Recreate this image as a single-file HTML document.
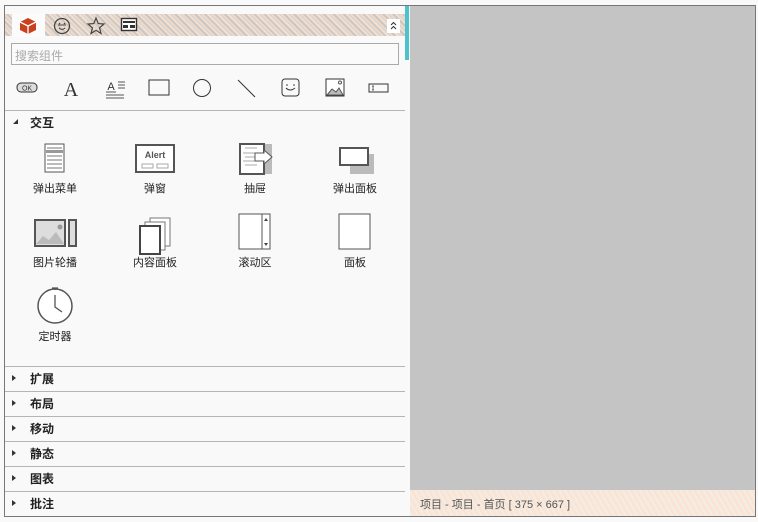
<!DOCTYPE html>
<html><head><meta charset="utf-8"><style>
*{margin:0;padding:0;box-sizing:border-box}
body{width:758px;height:522px;background:#f9f9f9;font-family:"Liberation Sans","Noto Sans CJK SC",sans-serif;position:relative;overflow:hidden}
.abs{position:absolute}
.frame{left:4px;top:5px;width:752px;height:512px;border:1px solid #777;}
.hdr{left:5px;top:14px;width:400px;height:22px;background:repeating-linear-gradient(45deg,#f0d8c6 0 2px,#c8c8c8 2px 4px,#f5dfcf 4px 6px,#d2d2d2 6px 7px)}
.tab{left:12px;top:13px;width:33px;height:24px;background:#fbfbfb}
.gray{left:410px;top:6px;width:345px;height:484px;background:#c4c4c4}
.status{left:410px;top:490px;width:345px;height:26px;background:repeating-linear-gradient(60deg,#fbe6d7 0 2px,#eaf3f2 2px 3px,#f9e3d3 3px 5px);font-size:11px;color:#555;padding:6px 0 0 10px}
.teal{left:405px;top:6px;width:4px;height:54px;background:#4ec2cc}
.search{left:11px;top:43px;width:388px;height:22px;border:1px solid #aaa;background:#fafafa;font-size:12px;color:#aaa;padding:3px 3px}
.sep{left:5px;width:400px;height:1px;background:#b5b5b5}
.lbl{font-size:11px;color:#222;text-align:center;width:100px}
.sec{left:30px;font-size:12px;font-weight:bold;color:#222}
.tri{left:12px;width:0;height:0;border-top:3px solid transparent;border-bottom:3px solid transparent;border-left:4px solid #333}
</style></head><body>
<div class="abs frame"></div>
<div class="abs hdr"></div>
<div class="abs tab"></div>
<svg class="abs" style="left:18px;top:16px" width="20" height="20" viewBox="0 0 20 20"><path d="M10 2 L18 6 L18 14 L10 18 L2 14 L2 6Z" fill="#c9401e"/><path d="M2 6 L10 10 L18 6 M10 10 V18" stroke="#fff" stroke-width="1.3" fill="none"/></svg>
<svg class="abs" style="left:52px;top:16px" width="20" height="20" viewBox="0 0 20 20"><circle cx="10" cy="10" r="7.5" fill="none" stroke="#444" stroke-width="1.3"/><path d="M6 9h8M7 12q3 3 6 0" stroke="#444" fill="none"/><circle cx="7.5" cy="7.5" r=".8" fill="#444"/><circle cx="12.5" cy="7.5" r=".8" fill="#444"/></svg>
<svg class="abs" style="left:86px;top:16px" width="20" height="20" viewBox="0 0 20 20"><path d="M10 2 L12.2 7.6 L18 8 L13.5 11.8 L15 17.5 L10 14.3 L5 17.5 L6.5 11.8 L2 8 L7.8 7.6Z" fill="none" stroke="#444" stroke-width="1.2"/></svg>
<svg class="abs" style="left:120px;top:17px" width="18" height="16" viewBox="0 0 18 16"><rect x="1.5" y="1.5" width="15" height="12" fill="#fff" stroke="#333" stroke-width="1.4"/><rect x="3" y="4" width="12" height="2" fill="#333"/><rect x="3" y="8" width="5" height="3" fill="#333"/><rect x="10" y="8" width="5" height="3" fill="#333"/></svg>
<svg class="abs" style="left:387px;top:19px" width="13" height="14" viewBox="0 0 13 14"><rect width="13" height="14" fill="#fff"/><path d="M4 6l2.5-2.5L9 6M4 10l2.5-2.5L9 10" stroke="#333" fill="none"/></svg>
<div class="abs teal"></div>
<div class="abs search">搜索组件</div>
<svg class="abs" style="left:5px;top:74px" width="400" height="30" viewBox="0 0 400 30">
<rect x="12" y="9" width="20" height="9" rx="4" fill="#ddd" stroke="#333"/><text x="22" y="16.5" font-size="7" text-anchor="middle" font-family="Liberation Sans" fill="#333">OK</text>
<text x="66" y="22" font-size="20" text-anchor="middle" font-family="Liberation Serif" fill="#333">A</text>
<text x="106" y="16" font-size="11" text-anchor="middle" font-family="Liberation Sans" fill="#333">A</text><path d="M101 18h10M101 21h18M101 24h18M113 8h7M113 11h7M113 14h7" stroke="#555"/>
<rect x="144" y="6" width="20" height="15" fill="none" stroke="#333"/>
<circle cx="197" cy="14" r="8.5" fill="none" stroke="#333"/>
<path d="M233 6 L250 23" stroke="#333"/>
<rect x="277" y="5" width="17" height="17" rx="3" fill="none" stroke="#333"/><path d="M281 14q4 4 9 0" stroke="#333" fill="none"/><circle cx="282" cy="11" r=".8" fill="#333"/><circle cx="289" cy="11" r=".8" fill="#333"/>
<rect x="321" y="5" width="18" height="17" fill="#fff" stroke="#333"/><path d="M322 21 L327 15 L331 18 L334 14 L338 21Z" fill="#bbb" stroke="#555"/><circle cx="335" cy="8.5" r="1.5" fill="none" stroke="#555"/>
<rect x="364" y="10" width="19" height="8" fill="none" stroke="#333"/><path d="M368 12v4M367 12h2M367 16h2" stroke="#333" stroke-width=".7"/>
</svg>
<div class="abs sep" style="top:110px"></div>
<div class="abs" style="left:13px;top:119px;width:0;height:0;border-left:5px solid transparent;border-bottom:5px solid #333"></div>
<div class="abs sec" style="top:114px">交互</div>
<svg class="abs" style="left:5px;top:140px" width="400" height="200" viewBox="0 0 400 200">
<rect x="40" y="4" width="19" height="28" fill="#fff" stroke="#555"/><rect x="41" y="10" width="17" height="3" fill="#999"/><path d="M42 8h15M42 16h15M42 20h15M42 24h15M42 28h15" stroke="#777"/>
<rect x="131" y="5" width="38" height="27" fill="#fff" stroke="#555" stroke-width="2"/><text x="150" y="18" font-size="9" font-weight="bold" text-anchor="middle" fill="#555" font-family="Liberation Sans">Alert</text><rect x="137" y="24" width="11" height="4" fill="none" stroke="#aaa"/><rect x="152" y="24" width="11" height="4" fill="none" stroke="#aaa"/>
<rect x="258" y="4" width="9" height="30" fill="#bbb"/><rect x="235" y="4" width="24" height="30" fill="#fff" stroke="#555" stroke-width="2"/><path d="M238 13h18M238 21h18M240 8h12M240 17h12M240 25h12" stroke="#aaa"/><path d="M250 13h9v-3l8 7-8 7v-3h-9Z" fill="#fff" stroke="#555"/>
<rect x="345" y="14" width="24" height="20" fill="#bbb"/><rect x="335" y="8" width="28" height="17" fill="#fff" stroke="#555" stroke-width="2"/>
<rect x="30" y="80" width="30" height="26" fill="#ddd" stroke="#555" stroke-width="2"/><path d="M31 104 L38 96 L44 100 L51 92 L59 104Z" fill="#bbb"/><circle cx="55" cy="87" r="2.5" fill="#999"/><rect x="64" y="80" width="7" height="26" fill="#ddd" stroke="#555" stroke-width="2"/>
<rect x="145" y="78" width="20" height="28" fill="#fff" stroke="#777"/><rect x="140" y="82" width="20" height="28" fill="#fff" stroke="#777"/><rect x="135" y="86" width="20" height="28" fill="#fff" stroke="#444" stroke-width="2"/>
<rect x="234" y="74" width="31" height="35" fill="#fff" stroke="#555"/><rect x="257" y="74" width="8" height="35" fill="#fff" stroke="#555"/><path d="M259 81l2-3 2 3ZM259 103l2 3 2-3Z" fill="#444"/>
<rect x="334" y="74" width="31" height="35" fill="#fff" stroke="#555"/>
<circle cx="50" cy="166" r="17" fill="#fff" stroke="#555" stroke-width="1.5"/><path d="M47 148h6M50 148v2M50 155v12l7 5" stroke="#555" fill="none" stroke-width="1.3"/>
</svg>
<div class="abs lbl" style="left:5px;top:180px">弹出菜单</div>
<div class="abs lbl" style="left:105px;top:180px">弹窗</div>
<div class="abs lbl" style="left:205px;top:180px">抽屉</div>
<div class="abs lbl" style="left:305px;top:180px">弹出面板</div>
<div class="abs lbl" style="left:5px;top:254px">图片轮播</div>
<div class="abs lbl" style="left:105px;top:254px">内容面板</div>
<div class="abs lbl" style="left:205px;top:254px">滚动区</div>
<div class="abs lbl" style="left:305px;top:254px">面板</div>
<div class="abs lbl" style="left:5px;top:328px">定时器</div>
<div class="abs sep" style="top:366px"></div>
<div class="abs sep" style="top:391px"></div>
<div class="abs sep" style="top:416px"></div>
<div class="abs sep" style="top:441px"></div>
<div class="abs sep" style="top:466px"></div>
<div class="abs sep" style="top:491px"></div>
<div class="abs tri" style="top:375px"></div><div class="abs sec" style="top:370px">扩展</div>
<div class="abs tri" style="top:400px"></div><div class="abs sec" style="top:395px">布局</div>
<div class="abs tri" style="top:425px"></div><div class="abs sec" style="top:420px">移动</div>
<div class="abs tri" style="top:450px"></div><div class="abs sec" style="top:445px">静态</div>
<div class="abs tri" style="top:475px"></div><div class="abs sec" style="top:470px">图表</div>
<div class="abs tri" style="top:500px"></div><div class="abs sec" style="top:495px">批注</div>
<div class="abs gray"></div>
<div class="abs status">项目 - 项目 - 首页 [ 375 × 667 ]</div>
</body></html>
